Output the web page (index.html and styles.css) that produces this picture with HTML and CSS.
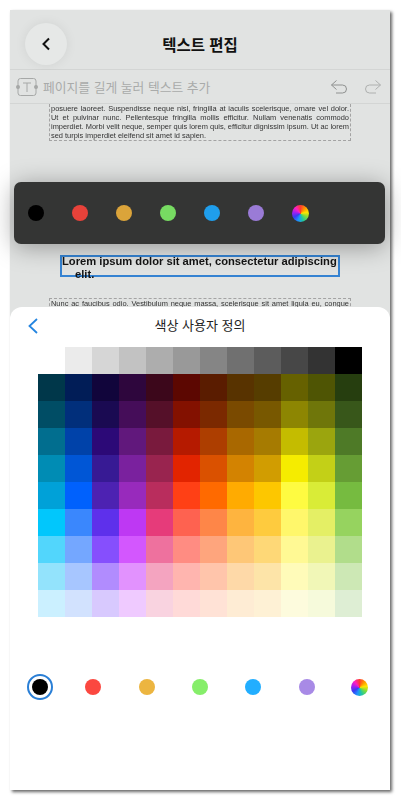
FILE: index.html
```html
<!DOCTYPE html>
<html lang="ko">
<head>
<meta charset="utf-8">
<title>텍스트 편집</title>
<link rel="stylesheet" href="styles.css">
</head>
<body>
<main class="screen">
  <header class="header">
    <button class="round-back" aria-label="뒤로">
      <svg width="12" height="14" viewBox="0 0 12 14"><path d="M9 1.5 3.5 7 9 12.5" fill="none" stroke="#111" stroke-width="2"/></svg>
    </button>
    <h1 class="title">텍스트 편집</h1>
  </header>
  <div class="toolbar">
    <svg class="t-icon" width="24" height="20" viewBox="0 0 24 20">
      <rect x="3" y="1.5" width="18" height="17" rx="2.5" fill="none" stroke="#a6a8a7" stroke-width="1"/>
      <path d="M8 6h8M12 6v9" fill="none" stroke="#a6a8a7" stroke-width="1"/>
      <circle cx="3" cy="10" r="2" fill="#a6a8a7"/><circle cx="21" cy="10" r="2" fill="#a6a8a7"/>
    </svg>
    <span class="hint">페이지를 길게 눌러 텍스트 추가</span>
    <div class="history">
      <svg width="18" height="16" viewBox="0 0 18 16"><path d="M6.5 1.5 1.5 6 6.5 10.5M1.5 6H12.5A4 4 0 0 1 12.5 14H6" fill="none" stroke="#8f9190" stroke-width="1"/></svg>
      <svg width="18" height="16" viewBox="0 0 18 16"><path d="M11.5 1.5 16.5 6 11.5 10.5M16.5 6H5.5A4 4 0 0 0 5.5 14H12" fill="none" stroke="#aeb0af" stroke-width="1"/></svg>
    </div>
  </div>
  <section class="canvas">
    <p class="para para-top">posuere laoreet. Suspendisse neque nisl, fringilla at iaculis scelerisque, ornare vel dolor. Ut et pulvinar nunc. Pellentesque fringilla mollis efficitur. Nullam venenatis commodo imperdiet. Morbi velit neque, semper quis lorem quis, efficitur dignissim ipsum. Ut ac lorem sed turpis imperdiet eleifend sit amet id sapien.</p>
    <h2 class="selected"><span class="sel-text">Lorem ipsum dolor sit amet, consectetur adipiscing<br><span class="hang">elit.</span></span></h2>
    <p class="para para-bottom">Nunc ac faucibus odio. Vestibulum neque massa, scelerisque sit amet ligula eu, congue</p>
  </section>

  <div class="quick-bar">
    <i class="dot c-black"></i><i class="dot c-red"></i><i class="dot c-amber"></i><i class="dot c-green"></i><i class="dot c-blue"></i><i class="dot c-purple"></i><i class="dot wheel"></i>
  </div>

  <section class="sheet">
    <div class="sheet-head">
      <svg class="sheet-back" width="12" height="16" viewBox="0 0 12 16"><path d="M10 1 2.5 8 10 15" fill="none" stroke="#2485e0" stroke-width="1.8"/></svg>
      <h2 class="sheet-title">색상 사용자 정의</h2>
    </div>
    <div class="grid" id="grid">
      <i style="background:#fff"></i><i style="background:#ebebeb"></i><i style="background:#d6d6d6"></i><i style="background:#c2c2c2"></i><i style="background:#adadad"></i><i style="background:#999"></i><i style="background:#858585"></i><i style="background:#707070"></i><i style="background:#5c5c5c"></i><i style="background:#474747"></i><i style="background:#333"></i><i style="background:#000"></i>
      <i style="background:#00374a"></i><i style="background:#011d57"></i><i style="background:#11053b"></i><i style="background:#2e063d"></i><i style="background:#3c071b"></i><i style="background:#5c0701"></i><i style="background:#5a1c00"></i><i style="background:#583300"></i><i style="background:#563d00"></i><i style="background:#666100"></i><i style="background:#4f5504"></i><i style="background:#263e0f"></i>
      <i style="background:#004d65"></i><i style="background:#012f7b"></i><i style="background:#1a0a52"></i><i style="background:#450d59"></i><i style="background:#551029"></i><i style="background:#831100"></i><i style="background:#7b2900"></i><i style="background:#7a4a00"></i><i style="background:#785800"></i><i style="background:#8d8602"></i><i style="background:#6f760a"></i><i style="background:#38571a"></i>
      <i style="background:#016e8f"></i><i style="background:#0042a9"></i><i style="background:#2c0977"></i><i style="background:#61187c"></i><i style="background:#791a3d"></i><i style="background:#b51a00"></i><i style="background:#ad3e00"></i><i style="background:#a96800"></i><i style="background:#a67b01"></i><i style="background:#c4bc00"></i><i style="background:#9ba50e"></i><i style="background:#4e7a27"></i>
      <i style="background:#008cb4"></i><i style="background:#0056d6"></i><i style="background:#371a94"></i><i style="background:#7a219e"></i><i style="background:#99244f"></i><i style="background:#e22400"></i><i style="background:#da5100"></i><i style="background:#d38301"></i><i style="background:#d19d01"></i><i style="background:#f5ec00"></i><i style="background:#c3d017"></i><i style="background:#669d34"></i>
      <i style="background:#00a1d8"></i><i style="background:#0061fd"></i><i style="background:#4d22b2"></i><i style="background:#982abc"></i><i style="background:#b92d5d"></i><i style="background:#ff4015"></i><i style="background:#ff6a00"></i><i style="background:#ffab01"></i><i style="background:#fdc700"></i><i style="background:#fefb41"></i><i style="background:#d9ec37"></i><i style="background:#76bb40"></i>
      <i style="background:#01c7fc"></i><i style="background:#3a87fd"></i><i style="background:#5e30eb"></i><i style="background:#be38f3"></i><i style="background:#e63b7a"></i><i style="background:#fe6250"></i><i style="background:#fe8648"></i><i style="background:#feb43f"></i><i style="background:#fecb3e"></i><i style="background:#fff76b"></i><i style="background:#e4ef65"></i><i style="background:#96d35f"></i>
      <i style="background:#52d6fc"></i><i style="background:#74a7ff"></i><i style="background:#864ffd"></i><i style="background:#d357fe"></i><i style="background:#ee719e"></i><i style="background:#ff8c82"></i><i style="background:#fea57d"></i><i style="background:#fec777"></i><i style="background:#fed877"></i><i style="background:#fff994"></i><i style="background:#eaf28f"></i><i style="background:#b1dd8b"></i>
      <i style="background:#93e3fc"></i><i style="background:#a7c6ff"></i><i style="background:#b18cfe"></i><i style="background:#e292fe"></i><i style="background:#f4a4c0"></i><i style="background:#ffb5af"></i><i style="background:#ffc5ab"></i><i style="background:#fed9a8"></i><i style="background:#fde4a8"></i><i style="background:#fffbb9"></i><i style="background:#f1f7b7"></i><i style="background:#cde8b5"></i>
      <i style="background:#cbf0ff"></i><i style="background:#d2e2fe"></i><i style="background:#d8c9fe"></i><i style="background:#efcaff"></i><i style="background:#f9d3e0"></i><i style="background:#ffdad8"></i><i style="background:#ffe2d6"></i><i style="background:#feecd4"></i><i style="background:#fef1d5"></i><i style="background:#fdfbdd"></i><i style="background:#f6fadb"></i><i style="background:#deeed4"></i>
    </div>
    <div class="swatches">
      <span class="slot is-selected"><i class="dot c-black"></i></span>
      <span class="slot"><i class="dot s-red"></i></span>
      <span class="slot"><i class="dot s-amber"></i></span>
      <span class="slot"><i class="dot s-green"></i></span>
      <span class="slot"><i class="dot s-blue"></i></span>
      <span class="slot"><i class="dot s-purple"></i></span>
      <span class="slot"><i class="dot wheel"></i></span>
    </div>
  </section>
</main>
</body>
</html>
```

FILE: styles.css
```css
* { box-sizing: border-box; }
html, body { margin: 0; padding: 0; background: #fff; }
body { width: 401px; height: 801px; overflow: hidden; padding: 10px 11px 11px 10px; font-family: "Liberation Sans", "Noto Sans CJK KR", sans-serif; }

.screen {
  position: relative;
  width: 380px;
  height: 780px;
  background: #e1e3e2;
  box-shadow: 2px 2px 3px rgba(0, 0, 0, .6);
  filter: blur(.35px);
}

.header {
  position: relative;
  height: 60px;
  padding-top: 8px;
  display: flex;
  align-items: center;
  justify-content: center;
  border-bottom: 1px solid #d3d5d4;
  background: #e1e3e2;
  z-index: 1;
}
.round-back {
  position: absolute;
  left: 15px;
  top: 13px;
  width: 42px;
  height: 42px;
  padding: 0;
  border: 0;
  border-radius: 50%;
  background: #e6e8e7;
  box-shadow: 0 0 12px rgba(0, 0, 0, .07);
  display: flex;
  align-items: center;
  justify-content: center;
}
.title {
  margin: 0;
  font: 700 15.5px/20px "Noto Sans CJK KR", sans-serif;
  color: #111;
}

.toolbar {
  position: relative;
  height: 34px;
  display: flex;
  align-items: center;
  padding: 0 8px 0 5px;
  border-bottom: 1px solid #d3d5d4;
  background: #e1e3e2;
  z-index: 1;
}
.t-icon { flex: none; margin-right: 4px; }
.hint {
  font: 400 12.8px/18px "Noto Sans CJK KR", sans-serif;
  color: #a9abaa;
}
.history { margin-left: auto; display: flex; gap: 16px; }

.canvas { height: 686px; overflow: hidden; padding: 0 39px; }
.para {
  margin: 0;
  font-size: 7.45px;
  line-height: 9.15px;
  text-align: justify;
  color: #333;
  border: 1px dashed #a3a3a3;
  padding: 0 1px;
  width: 302px;
}
.para-top { border-top: 0; height: 36.5px; }
.selected {
  margin: 114.5px 0 0 11px;
  width: 280px;
  height: 22px;
  border: 2px solid #3583d2;
  font-size: 11.2px;
  font-weight: 700;
  line-height: 13px;
  color: #141414;
  white-space: nowrap;
}
.sel-text { display: block; margin-top: -2px; }
.hang { margin-left: 13px; }
.para-bottom { margin-top: 21px; height: 60px; text-align-last: justify; }

.quick-bar {
  position: absolute;
  left: 4px;
  top: 172px;
  width: 371px;
  height: 62px;
  border-radius: 7px;
  background: #343534;
  box-shadow: 0 3px 24px rgba(0, 0, 0, .35);
  padding: 0 0 0 14px;
  display: flex;
  align-items: center;
  gap: 28px;
  z-index: 2;
}
.dot { display: block; flex: none; width: 16px; height: 16px; border-radius: 50%; }
.c-black { background: #000; }
.c-red { background: #e8423a; }
.c-amber { background: #dba43a; }
.c-green { background: #77db62; }
.c-blue { background: #1f9eec; }
.c-purple { background: #9a7bd6; }
.s-red { background: #fb4840; }
.s-amber { background: #ecb540; }
.s-green { background: #86ee6a; }
.s-blue { background: #22aeff; }
.s-purple { background: #a88ae6; }
.wheel {
  width: 17px;
  height: 17px;
  background: conic-gradient(#ff3b30, #ff9500, #ffe600, #7ddc3c, #20c8a0, #1e90ff, #3a3af0, #a020f0, #ff20c0, #ff3b30);
}

.sheet {
  position: absolute;
  left: 0;
  right: 0;
  bottom: 0;
  height: 483px;
  background: #fff;
  border-radius: 12px 12px 0 0;
  z-index: 3;
}
.sheet-head {
  position: relative;
  height: 40px;
  display: flex;
  align-items: center;
  justify-content: center;
  padding-bottom: 4px;
}
.sheet-back { position: absolute; left: 17px; top: 11px; }
.sheet-title {
  margin: 0;
  font: 400 13px/18px "Noto Sans CJK KR", sans-serif;
  color: #222;
}
.grid {
  display: grid;
  grid-template-columns: repeat(12, 27px);
  grid-auto-rows: 27px;
  width: 324px;
  margin-left: 28px;
}
.grid i { display: block; }

.swatches {
  margin: 57px 0 0 17px;
  width: 346px;
  display: flex;
  justify-content: space-between;
  align-items: center;
}
.slot {
  width: 26px;
  height: 26px;
  border-radius: 50%;
  display: flex;
  align-items: center;
  justify-content: center;
}
.is-selected { border: 2px solid #2a7fd6; }
```
